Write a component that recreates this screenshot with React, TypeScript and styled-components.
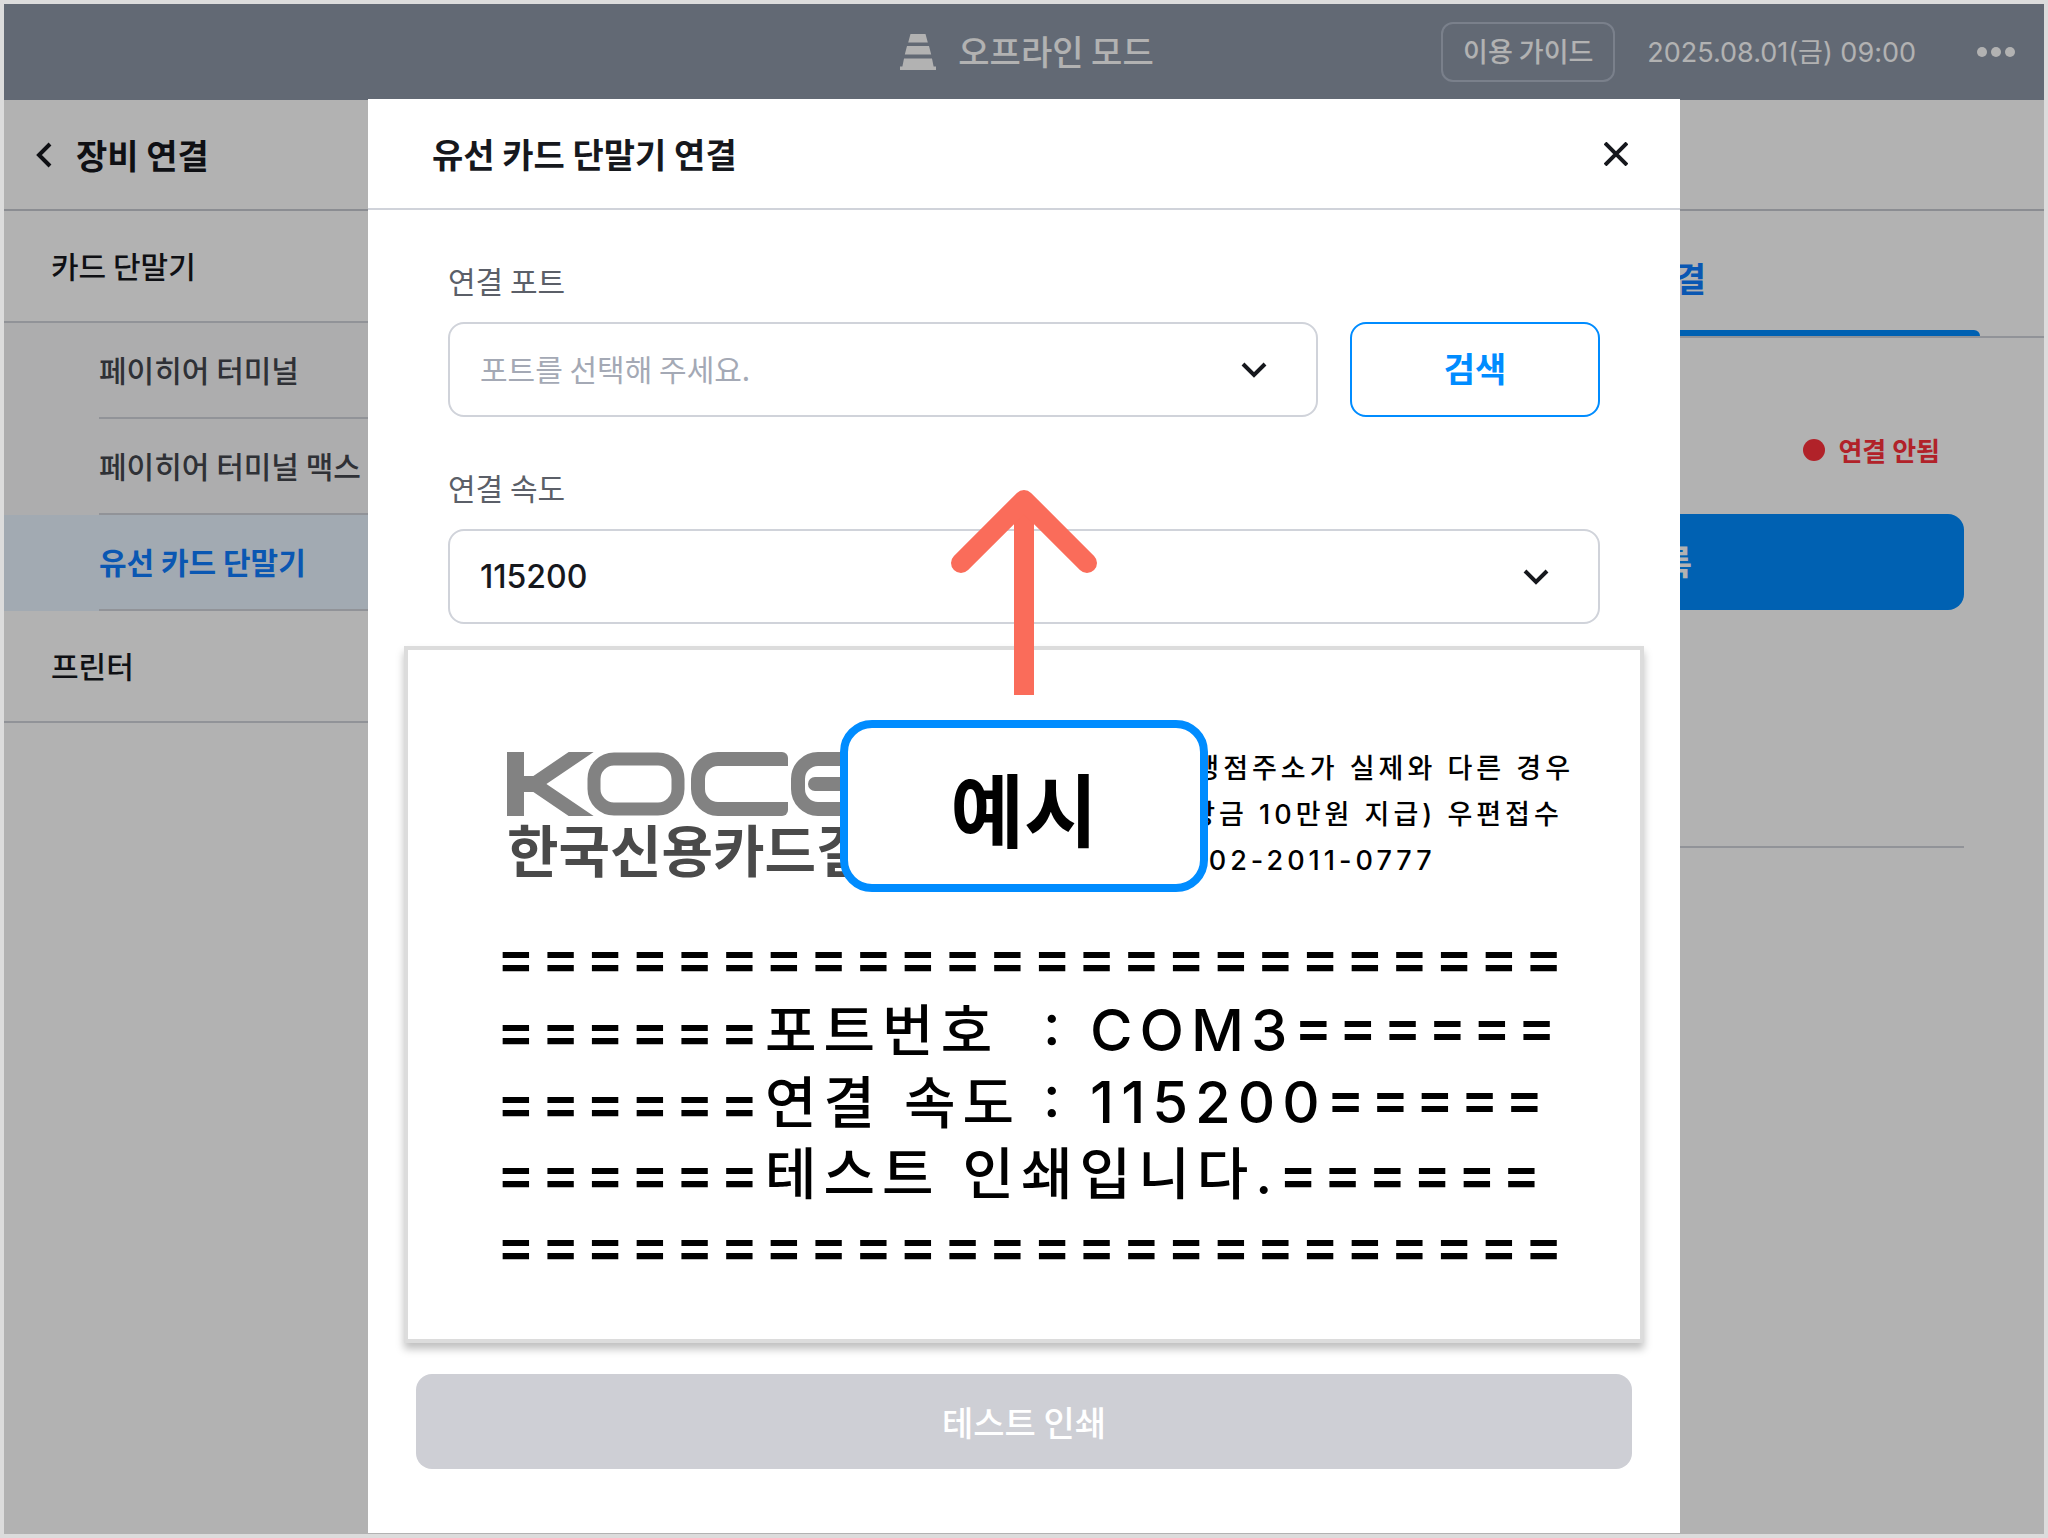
import React from "react";
import styled, { createGlobalStyle } from "styled-components";

const hangul = `"Noto Sans CJK KR", Inter, sans-serif`;
const numeric = `Inter, "Noto Sans CJK KR", sans-serif`;

const color = {
  ink: "#16181d",
  blue: "#008cff",
  line: "#d0d3da",
  slate: "#8d97a7",
};

const GlobalStyle = createGlobalStyle`
  *, *::before, *::after { box-sizing: border-box; }
  body { margin: 0; font-family: ${hangul}; color: ${color.ink}; }
  button, select { font-family: inherit; }
  h1, h2, p, ul, figure { margin: 0; padding: 0; }
  ul { list-style: none; }
`;

const Frame = styled.div`
  position: relative;
  display: flex;
  flex-direction: column;
  min-height: 100vh;
  border: 4px solid #dcdcdc;
  background: #fff;
`;

/* ---------- top bar ---------- */

const TopBar = styled.header`
  display: grid;
  grid-template-columns: 1fr auto 1fr;
  align-items: center;
  height: 96px;
  padding: 0 28px;
  background: ${color.slate};
  color: #fff;
`;

const ModeLabel = styled.div`
  grid-column: 2;
  display: flex;
  align-items: center;
  gap: 22px;
  padding-left: 6px;
  font-size: 34px;
  font-weight: 500;
  line-height: 48px;
`;

const ModeText = styled.span`
  padding-bottom: 2px;
`;

const TopActions = styled.div`
  display: flex;
  justify-content: flex-end;
  align-items: center;
`;

const GuideButton = styled.button`
  width: 174px;
  height: 60px;
  padding: 0 0 4px;
  border: 2px solid #afb8c8;
  border-radius: 12px;
  background: none;
  color: inherit;
  font-size: 27px;
  font-weight: 500;
`;

const Clock = styled.time`
  margin: 0 60px 0 32px;
  padding-bottom: 4px;
  font-family: ${numeric};
  font-size: 27px;
  white-space: nowrap;
`;

const IconButton = styled.button`
  display: flex;
  align-items: center;
  justify-content: center;
  padding: 0;
  border: 0;
  background: none;
  color: inherit;
`;

/* ---------- page behind the dialog ---------- */

const Page = styled.div`
  flex: 1;
  display: flex;
`;

const Sidebar = styled.nav`
  width: 490px;
  flex: none;
`;

const SidebarHeader = styled.div`
  display: flex;
  align-items: center;
  gap: 22px;
  height: 111px;
  padding-left: 30px;
  border-bottom: 2px solid #c8cbd2;
`;

const SidebarTitle = styled.h1`
  font-size: 34px;
  font-weight: 700;
  line-height: 48px;
`;

const GroupLink = styled.a`
  display: flex;
  align-items: center;
  height: 112px;
  padding: 0 0 2px 47px;
  border-bottom: 2px solid ${color.line};
  color: inherit;
  font-size: 30px;
  font-weight: 500;
  text-decoration: none;
`;

const SubItem = styled.li<{ $active?: boolean }>`
  padding-left: 95px;
  background: ${(p) => (p.$active ? "#e9f4ff" : "#f8f8fa")};
`;

const SubLink = styled.a<{ $active?: boolean }>`
  display: flex;
  align-items: center;
  height: 96px;
  padding-bottom: 2px;
  border-bottom: 2px solid ${color.line};
  color: ${(p) => (p.$active ? "#0f7dff" : "#44474e")};
  font-size: 30px;
  font-weight: ${(p) => (p.$active ? 700 : 500)};
  text-decoration: none;
`;

const Main = styled.main`
  flex: 1;
`;

const MainHeader = styled.div`
  height: 111px;
  border-bottom: 2px solid #c8cbd2;
`;

const Tabs = styled.div`
  display: flex;
  height: 127px;
  padding: 0 64px 0 62px;
  border-bottom: 2px solid ${color.line};
`;

const Tab = styled.button<{ $active?: boolean }>`
  position: relative;
  flex: 1;
  padding: 8px 0 0;
  border: 0;
  background: none;
  color: ${(p) => (p.$active ? "#0f7dff" : "#8d97a7")};
  font-size: 34px;
  font-weight: 700;

  &::after {
    content: "";
    display: ${(p) => (p.$active ? "block" : "none")};
    position: absolute;
    left: 0;
    right: 0;
    bottom: 0;
    height: 6px;
    border-radius: 8px 8px 0 0;
    background: ${color.blue};
  }
`;

const DevicePanel = styled.section`
  display: flex;
  flex-direction: column;
  align-items: flex-end;
  height: 510px;
  margin: 0 80px;
  padding-top: 92px;
  border-bottom: 2px solid ${color.line};
`;

const Status = styled.p`
  display: flex;
  align-items: center;
  gap: 13px;
  padding-right: 24px;
  color: #fe313c;
  font-size: 26px;
  font-weight: 700;
  line-height: 40px;
`;

const Dot = styled.span`
  width: 22px;
  height: 22px;
  border-radius: 50%;
  background: currentColor;
`;

const RegisterButton = styled.button`
  width: 708px;
  height: 96px;
  margin-top: 44px;
  padding: 0 0 4px;
  border: 0;
  border-radius: 16px;
  background: ${color.blue};
  color: #fff;
  font-size: 34px;
  font-weight: 700;
`;

/* ---------- dialog ---------- */

const Overlay = styled.div`
  position: absolute;
  inset: 0;
  display: flex;
  justify-content: center;
  padding: 95px 0 1px;
  background: rgba(0, 0, 0, 0.3);
`;

const Dialog = styled.section`
  width: 100%;
  max-width: 1312px;
  background: #fff;
`;

const DialogHeader = styled.header`
  display: flex;
  align-items: center;
  justify-content: space-between;
  height: 111px;
  padding: 0 52px 0 64px;
  border-bottom: 2px solid ${color.line};
`;

const DialogTitle = styled.h2`
  font-size: 34px;
  font-weight: 700;
  line-height: 48px;
`;

const Form = styled.form`
  display: flex;
  flex-direction: column;
  gap: 50px;
  padding: 50px 80px 22px;
`;

const Field = styled.div`
  display: flex;
  flex-direction: column;
  gap: 22px;
`;

const Label = styled.label`
  color: #5b5f68;
  font-size: 30px;
  line-height: 40px;
`;

const FieldRow = styled.div`
  display: flex;
  gap: 32px;
`;

const SelectWrap = styled.div`
  position: relative;
  flex: 1;

  svg {
    position: absolute;
    right: 48px;
    top: 50%;
    transform: translateY(-50%);
    pointer-events: none;
  }
`;

const Select = styled.select<{ $empty?: boolean }>`
  display: block;
  width: 100%;
  height: 95px;
  padding: 0 96px ${(p) => (p.$empty ? "4px" : "0")} 30px;
  border: 2px solid ${color.line};
  border-radius: 16px;
  background: #fff;
  appearance: none;
  color: ${(p) => (p.$empty ? "#a4a9b5" : color.ink)};
  font-family: ${(p) => (p.$empty ? hangul : numeric)};
  font-size: ${(p) => (p.$empty ? "30px" : "32px")};
  font-weight: ${(p) => (p.$empty ? 400 : 500)};
`;

const SearchButton = styled.button`
  width: 250px;
  height: 95px;
  padding: 0 0 4px;
  border: 2px solid ${color.blue};
  border-radius: 16px;
  background: #fff;
  color: ${color.blue};
  font-size: 34px;
  font-weight: 700;
`;

const PrintButton = styled.button`
  display: block;
  width: calc(100% - 96px);
  height: 95px;
  margin: 31px 48px 64px;
  border: 0;
  border-radius: 16px;
  background: #cecfd5;
  color: #fff;
  font-size: 34px;
  font-weight: 500;
`;

/* ---------- sample receipt ---------- */

const Receipt = styled.figure`
  position: relative;
  margin: 0 36px;
  padding: 96px 66px 57px 89px;
  border: 4px solid #dcdcdc;
  background: #fff;
  box-shadow: 0 6px 8px rgba(0, 0, 0, 0.25);
  color: #000;
`;

const ReceiptHead = styled.div`
  display: flex;
  justify-content: space-between;
  height: 138px;
`;

const Brand = styled.div`
  padding: 6px 0 0 10px;

  svg {
    display: block;
  }
`;

const BrandName = styled.p`
  color: #4a4a4a;
  font-size: 56px;
  font-weight: 700;
  line-height: 64px;
`;

const Notice = styled.p`
  font-family: ${numeric};
  font-size: 27px;
  font-weight: 500;
  line-height: 46px;
  letter-spacing: 4px;
  white-space: nowrap;
`;

const PrintLines = styled.div`
  margin-top: 38px;
`;

const PrintLine = styled.p`
  display: flex;
  align-items: baseline;
  height: 72px;
  font-family: ${numeric};
  font-size: 56px;
  font-weight: 500;
  line-height: 72px;
  letter-spacing: 7px;
  white-space: pre;
`;

const Rule = styled.span<{ $raised?: boolean }>`
  font-weight: 600;
  font-feature-settings: ${(p) => (p.$raised ? `"case"` : "normal")};
`;

const Value = styled.span`
  font-size: 58px;
  font-feature-settings: "case";
`;

const Callout = styled.figcaption`
  position: absolute;
  top: 70px;
  left: 50%;
  transform: translateX(-50%);
  display: flex;
  align-items: center;
  justify-content: center;
  width: 368px;
  height: 172px;
  border: 8px solid ${color.blue};
  border-radius: 32px;
  background: #fff;
  font-size: 80px;
  font-weight: 700;
`;

const Arrow = styled.svg`
  position: absolute;
  top: -161px;
  left: 50%;
  transform: translateX(-50%);
`;

/* ---------- icons ---------- */

const ConeIcon = () => (
  <svg width="36" height="36" viewBox="0 0 36 36" fill="currentColor" aria-hidden="true">
    <path d="M10.500 0h15l2.300 8.500H8.200zM7 12h22l2.200 8.500H4.800zM4 24.500h28l1.600 8H36V36H0v-3.500h2.400z" />
  </svg>
);

const MoreIcon = () => (
  <svg width="40" height="12" viewBox="0 0 40 12" fill="currentColor" aria-hidden="true">
    <circle cx="6" cy="6" r="5" />
    <circle cx="20" cy="6" r="5" />
    <circle cx="34" cy="6" r="5" />
  </svg>
);

const BackIcon = () => (
  <svg width="20" height="28" viewBox="0 0 20 28" fill="none" stroke="currentColor" strokeWidth="4" aria-hidden="true">
    <path d="M16 3L5 14l11 11" />
  </svg>
);

const CloseIcon = () => (
  <svg width="24" height="24" viewBox="0 0 24 24" fill="none" stroke="currentColor" strokeWidth="4" aria-hidden="true">
    <path d="M1 1l22 22M23 1L1 23" />
  </svg>
);

const ChevronIcon = () => (
  <svg width="32" height="20" viewBox="0 0 32 20" fill="none" stroke={color.ink} strokeWidth="4" aria-hidden="true">
    <path d="M5 4l11 11L27 4" />
  </svg>
);

const KocesLogo = () => (
  <svg width="480" height="64" viewBox="0 0 480 64" role="img" aria-label="KOCES">
    <defs>
      <clipPath id="mark">
        <rect width="480" height="64" />
      </clipPath>
      <clipPath id="open">
        <rect x="184" width="97" height="64" rx="6" />
      </clipPath>
    </defs>
    <g fill="none" stroke="#828282" strokeWidth="14" clipPath="url(#mark)">
      <line x1="8.500" y1="0" x2="8.500" y2="64" strokeWidth="17" />
      <polyline points="83,-6 27,32 83,70" strokeLinejoin="bevel" />
      <line x1="14" y1="32" x2="30" y2="32" strokeWidth="16" />
      <rect x="87" y="7" width="84" height="50" rx="20" strokeWidth="13" />
      <g clipPath="url(#open)">
        <rect x="191" y="7" width="130" height="50" rx="20" />
      </g>
      <rect x="291" y="7" width="84" height="50" rx="20" />
      <line x1="308" y1="32" x2="380" y2="32" strokeLinecap="round" />
      <rect x="394" y="7" width="80" height="50" rx="16" />
    </g>
  </svg>
);

/* ---------- content ---------- */

const devices = [
  { name: "페이히어 터미널" },
  { name: "페이히어 터미널 맥스" },
  { name: "유선 카드 단말기", active: true },
];

const fullRule = "=".repeat(24);
const sideRule = "=".repeat(6);

export default function App() {
  return (
    <>
      <GlobalStyle />
      <Frame>
        <TopBar>
          <ModeLabel>
            <ConeIcon />
            <ModeText>오프라인 모드</ModeText>
          </ModeLabel>
          <TopActions>
            <GuideButton type="button">이용 가이드</GuideButton>
            <Clock dateTime="2025-08-01T09:00">2025.08.01(금) 09:00</Clock>
            <IconButton type="button" aria-label="더보기">
              <MoreIcon />
            </IconButton>
          </TopActions>
        </TopBar>

        <Page>
          <Sidebar>
            <SidebarHeader>
              <IconButton type="button" aria-label="뒤로">
                <BackIcon />
              </IconButton>
              <SidebarTitle>장비 연결</SidebarTitle>
            </SidebarHeader>
            <GroupLink href="#card">카드 단말기</GroupLink>
            <ul>
              {devices.map((d) => (
                <SubItem key={d.name} $active={d.active}>
                  <SubLink href="#device" $active={d.active}>
                    {d.name}
                  </SubLink>
                </SubItem>
              ))}
            </ul>
            <GroupLink href="#printer">프린터</GroupLink>
          </Sidebar>
          <Main>
            <MainHeader />
            <Tabs>
              <Tab type="button" aria-label="연결 안내" />
              <Tab type="button" $active>
                단말기 연결
              </Tab>
            </Tabs>
            <DevicePanel>
              <Status>
                <Dot />
                연결 안됨
              </Status>
              <RegisterButton type="button">단말기 등록</RegisterButton>
            </DevicePanel>
          </Main>
        </Page>

        <Overlay>
          <Dialog role="dialog" aria-labelledby="dialog-title">
            <DialogHeader>
              <DialogTitle id="dialog-title">유선 카드 단말기 연결</DialogTitle>
              <IconButton type="button" aria-label="닫기">
                <CloseIcon />
              </IconButton>
            </DialogHeader>
            <Form>
              <Field>
                <Label htmlFor="port">연결 포트</Label>
                <FieldRow>
                  <SelectWrap>
                    <Select id="port" $empty defaultValue="">
                      <option value="">포트를 선택해 주세요.</option>
                    </Select>
                    <ChevronIcon />
                  </SelectWrap>
                  <SearchButton type="button">검색</SearchButton>
                </FieldRow>
              </Field>
              <Field>
                <Label htmlFor="speed">연결 속도</Label>
                <SelectWrap>
                  <Select id="speed" defaultValue="115200">
                    <option value="115200">115200</option>
                  </Select>
                  <ChevronIcon />
                </SelectWrap>
              </Field>
            </Form>

            <Receipt>
              <ReceiptHead>
                <Brand>
                  <KocesLogo />
                  <BrandName>한국신용카드결제</BrandName>
                </Brand>
                <Notice>
                  *가맹점주소가 실제와 다른 경우
                  <br />
                  (포상금 10만원 지급) 우편접수
                  <br />
                  Tel 02-2011-0777
                </Notice>
              </ReceiptHead>
              <PrintLines>
                <PrintLine>
                  <Rule>{fullRule}</Rule>
                </PrintLine>
                <PrintLine>
                  <Rule>{sideRule}</Rule>
                  {"포트번호  "}
                  <Value>: COM3</Value>
                  <Rule $raised>{sideRule}</Rule>
                </PrintLine>
                <PrintLine>
                  <Rule>{sideRule}</Rule>
                  {"연결 속도 "}
                  <Value>: 115200</Value>
                  <Rule $raised>{"=".repeat(5)}</Rule>
                </PrintLine>
                <PrintLine>
                  <Rule>{sideRule}</Rule>
                  {"테스트 인쇄입니다."}
                  <Rule>{sideRule}</Rule>
                </PrintLine>
                <PrintLine>
                  <Rule>{fullRule}</Rule>
                </PrintLine>
              </PrintLines>
              <Callout>예시</Callout>
              <Arrow width="148" height="206" viewBox="0 0 148 206" fill="none" stroke="#fa6c5a" strokeWidth="20" aria-hidden="true">
                <path d="M74 14v192" />
                <path d="M11 74L74 11l63 63" strokeLinecap="round" strokeLinejoin="round" />
              </Arrow>
            </Receipt>

            <PrintButton type="button" disabled>
              테스트 인쇄
            </PrintButton>
          </Dialog>
        </Overlay>
      </Frame>
    </>
  );
}
